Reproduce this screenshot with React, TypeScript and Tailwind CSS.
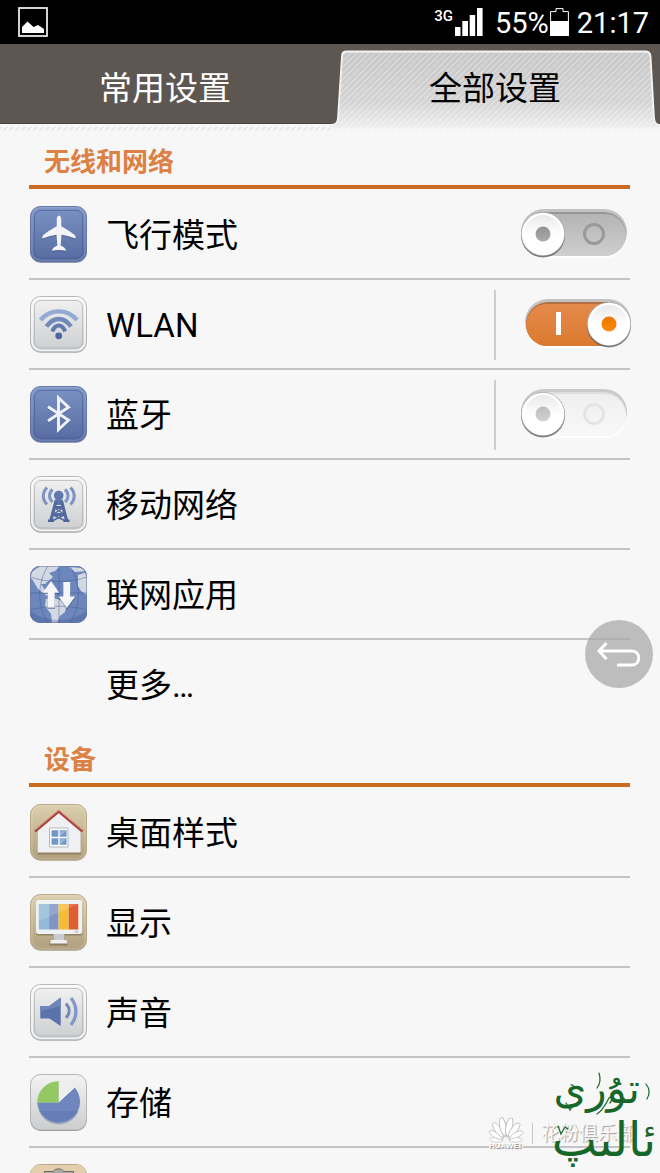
import { useId, useState, type ReactNode } from "react";

function Tile({ tone, children }: { tone: "blue" | "light" | "tan"; children: ReactNode }) {
  const id = useId();
  const colors = {
    blue: ["#7b93c4", "#566aa0", "#6579a8"],
    light: ["#f3f3f3", "#cbcdcf", "#b4b6b8"],
    tan: ["#dccfae", "#b09f7d", "#b9aa8a"],
  }[tone];
  return (
    <svg viewBox="0 0 57 58" className="h-[58px] w-[57px] shrink-0" aria-hidden="true">
      <defs>
        <linearGradient id={id} x1="0" y1="0" x2="0" y2="1">
          <stop offset="0" stopColor={colors[0]} />
          <stop offset="1" stopColor={colors[1]} />
        </linearGradient>
      </defs>
      <rect x="0.5" y="1" width="56" height="56" rx="10" fill="#000" opacity="0.22" />
      <rect x="0.5" y="0.5" width="56" height="55.5" rx="10" fill={`url(#${id})`} stroke={colors[2]} />
      <rect x="2" y="1.8" width="53" height="52.6" rx="9" fill="none" stroke="#fff" strokeOpacity={tone === "light" ? 0.85 : 0.15} strokeWidth="1.4" />
      {tone !== "tan" && (
        <rect x="4.5" y="4.5" width="48" height="47.5" rx="6.5" fill="none" stroke={tone === "blue" ? "#465c94" : "#a5a7aa"} strokeOpacity="0.6" />
      )}
      {children}
    </svg>
  );
}

const PLANE =
  "M29 9.500c1.600 0 2.300 2.400 2.300 5v5.800c5 2.800 10.500 6 13.300 8.800 1 1 1.200 2.200 1.200 3.400-4.500-1.600-9.500-3.100-14.300-3.800l-.8 10.800c2.600 1.300 4.900 2.600 5.400 5.200-2.500-.4-5-.8-7.100-.8s-4.600.4-7.100.8c.5-2.600 2.800-3.900 5.400-5.200l-.8-10.800c-4.800.7-9.800 2.200-14.300 3.800 0-1.200.2-2.400 1.200-3.400 2.800-2.800 8.300-6 13.300-8.800v-5.800c0-2.600.7-5 2.300-5z";

function PlaneIcon() {
  return (
    <Tile tone="blue">
      <path d={PLANE} fill="#2e4276" opacity=".4" transform="translate(0 1)" />
      <path d={PLANE} fill="#f2f4f9" />
    </Tile>
  );
}

function WifiIcon() {
  return (
    <Tile tone="light">
      <g fill="none" strokeWidth="4.400">
        <path d="M10.500 24C20.500 12.500 37 12.500 47 24" stroke="#94a9d3" />
        <path d="M16.500 30.500C23.500 20.500 34 20.500 41 30.500" stroke="#7289bb" />
        <path d="M22.300 35.500C25.500 27.500 32 27.500 35.200 35.500" stroke="#6179ae" strokeWidth="4" />
      </g>
      <circle cx="28.700" cy="39.800" r="3.400" fill="#4f659f" />
    </Tile>
  );
}

function BluetoothIcon() {
  return (
    <Tile tone="blue">
      <path d="M18 20.800L38.500 34.300 28.500 43.500V12L38.500 21.300 18 35" fill="none" stroke="#2e4276" strokeOpacity=".4" strokeWidth="3" transform="translate(0 1)" />
      <path d="M18 20.800L38.500 34.300 28.500 43.500V12L38.500 21.300 18 35" fill="none" stroke="#eef1f8" strokeWidth="3" />
    </Tile>
  );
}

function TowerIcon() {
  return (
    <Tile tone="light">
      <g fill="none" stroke="#7f94c2" strokeWidth="3">
        <path d="M22.500 13.500c-4 3.500-4 9 0 12.500M35 13.500c4 3.500 4 9 0 12.500" />
        <path d="M17 11.500c-5 5-5 12 0 17M40.500 11.500c5 5 5 12 0 17" />
      </g>
      <circle cx="28.700" cy="19.500" r="4.800" fill="#6078ad" />
      <path d="M24.800 23.500h7.900v5.500h-7.900z" fill="#5f76aa" />
      <g fill="none" stroke="#536a9f" strokeWidth="3.200">
        <path d="M26 25L20.800 45M31.500 25l5.200 20M24 31.500h9.500M22.500 38.500h12.500" />
        <path d="M24 31.500l10.500 7M33.500 31.500L23 38.500M22.500 38.500L35.500 45M35 38.500L22 45" strokeWidth="1.400" />
      </g>
      <path d="M18 43.500h6v2.500H18zM33.500 43.500h6v2.500h-6z" fill="#4d6399" />
    </Tile>
  );
}

function GlobeIcon() {
  const clip = useId();
  return (
    <Tile tone="blue">
      <clipPath id={clip}><rect width="57" height="57" rx="10" /></clipPath>
      <g clipPath={`url(#${clip})`}>
        <path d="M0 0h57v57H0z" fill="#6d87bd" />
        <path d="M0 7L10 0H30L25 5 19 7 23 11 15 18 11 18 15 24 19 28 17 30 8 23 2 13 0 12zM48 9L57 6V29L51 25 48 20zM16 33C23 30 30 34 37 37L35 46 30 50 27 57H22L21 48 15 40zM39 1L51 2 57 5 45 6z" fill="#d3d9e2" />
        <g fill="none" stroke="#405b94" strokeWidth=".8" opacity=".6">
          <path d="M29 0v57M18 0C7 17 7 40 18 57M40 0C51 17 51 40 40 57M5 0C-7 20-7 40 5 57M52 0C64 20 64 40 52 57M0 11C18 17 40 17 57 11M0 27H57M0 44C18 39 40 39 57 44" />
        </g>
        <path d="M0 45C18 57 40 57 57 45V57H0z" fill="#314b86" opacity=".28" />
      </g>
      <path d="M21 16.500L29.500 28H25v15h-7.500V28H12.500zM33.300 17.500H40.800V31.500H45.500L37 43.500 28.500 31.500H33.300z" fill="#263960" opacity=".45" />
      <path d="M21 15L29.200 26.800H24.700v14.700h-7V26.800H12.700zM33.300 16H40.300V30.500H45.200L36.900 42 28.500 30.500H33.300z" fill="#f5f6f8" />
      <rect x=".5" y=".5" width="56" height="56" rx="10" fill="none" stroke="#6577a0" opacity=".55" />
    </Tile>
  );
}

function HouseIcon() {
  return (
    <Tile tone="tan">
      <path d="M7.700 26L28.700 8.500 51 26V49.500H7.700z" fill="#6c5b3d" opacity=".5" transform="translate(0 1)" />
      <path d="M7.700 26L28.700 8.500 50.700 26V48.500H7.700z" fill="#eff0f1" />
      <path d="M5 27.500L28.700 7.500 52.500 27.500" fill="none" stroke="#a9403b" strokeWidth="2.400" />
      <path d="M5.500 26L28.700 6.500 52 26" fill="none" stroke="#d98177" strokeWidth=".8" />
      <path d="M19.500 24h18.500v19H19.500z" fill="#fff" stroke="#b4b7bb" />
      <path d="M21.500 26.200h6.800v6.500h-6.800zM29.800 26.200h6.800v6.500h-6.800zM21.500 34.200h6.800v6.500h-6.800zM29.800 34.200h6.800v6.500h-6.800z" fill="#7298c7" />
      <path d="M29.800 26.200h6.800L29.800 32.700zM29.800 34.200h6.800l-6.800 6.500z" fill="#94b3da" />
    </Tile>
  );
}

function MonitorIcon() {
  return (
    <Tile tone="tan">
      <path d="M23 39h12v7l2.500 2v3.500H19.500V48l3.500-2z" fill="#665838" opacity=".5" />
      <rect x="6" y="7.500" width="46.500" height="34" rx="2.500" fill="#665838" opacity=".5" />
      <path d="M23.500 39h11v7H23.500z" fill="#c9cbcf" />
      <path d="M21 46h15.500l1 3.500H20z" fill="#eff0f2" />
      <rect x="6" y="6" width="46.300" height="34" rx="2.500" fill="#f0f1f3" />
      <path d="M8.800 10h10.300v25.500H8.800z" fill="#93bad8" />
      <path d="M19.100 10h9.500v25.500h-9.500z" fill="#8194c5" />
      <path d="M28.600 10h10.100v25.500H28.600z" fill="#f3bd38" />
      <path d="M38.700 10h9.600v25.500h-9.600z" fill="#e05e34" />
      <path d="M8.800 10H48.300L8.800 27z" fill="#fff" opacity=".16" />
      <circle cx="46.500" cy="37.800" r="1.200" fill="none" stroke="#a8aaad" strokeWidth=".7" />
    </Tile>
  );
}

function SpeakerIcon() {
  return (
    <Tile tone="light">
      <path d="M10.300 22H19.300L30.700 13.500V42L19.300 34.500H10.300z" fill="#5b73ab" />
      <path d="M10.300 22H19.300L30.700 13.500V22L10.300 27z" fill="#6f86bb" />
      <path d="M36 19.500c4.200 4.700 4.200 10 0 14.200" fill="none" stroke="#7188b9" strokeWidth="3" />
      <path d="M41 14c6.500 8 6.500 19 0 27" fill="none" stroke="#8298c8" strokeWidth="3.400" />
    </Tile>
  );
}

function PieIcon() {
  const id = useId();
  return (
    <svg viewBox="0 0 57 58" className="h-[58px] w-[57px] shrink-0" aria-hidden="true">
      <defs>
        <linearGradient id={id} x1="0" y1="0" x2="0" y2="1">
          <stop offset="0" stopColor="#f3f3f3" />
          <stop offset="1" stopColor="#cbcdcf" />
        </linearGradient>
      </defs>
      <rect x=".5" y="1" width="56" height="56" rx="10" fill="#8c8e90" />
      <rect x=".5" y=".5" width="56" height="55.500" rx="10" fill={`url(#${id})`} stroke="#b3b5b8" />
      <circle cx="28.700" cy="29" r="21.500" fill="#8f99ab" opacity=".35" />
      <path d="M7.300 28.500A21.400 21.400 0 0 0 50 28.500C50 22 48 17 44.700 13.500L28.500 28.500z" fill="#6f87be" />
      <path d="M9 37A21.400 21.400 0 0 0 48.500 37z" fill="#566da8" opacity=".35" />
      <path d="M28.500 28.500V7.200A21.300 21.300 0 0 0 7.300 28.500z" fill="#93c862" />
      <path d="M29 27.500V7.200C35 7.200 40.500 9.500 44.700 13z" fill="#edeeee" />
      <path d="M29 27.500L44.700 13" stroke="#fff" />
    </svg>
  );
}

function ClipboardIcon() {
  return (
    <Tile tone="tan">
      <path d="M1 10C1 4 5 1 11 1h35c6 0 10 3 10 9v45H1z" fill="#e3cfac" />
      <rect x="10" y="9" width="37" height="42" rx="2" fill="#f4f4f2" />
      <path d="M14.500 7.500h9c1-3.500 9-3.500 10 0h10v5h-29z" fill="#a9a9a6" stroke="#6f6c65" />
    </Tile>
  );
}

function Toggle({ label, initial = false, faint = false }: { label: string; initial?: boolean; faint?: boolean }) {
  const [on, setOn] = useState(initial);
  const id = useId();
  const x = on ? 5 : 1;
  const knob = on ? 89 : 23;
  const top = on ? "#e58a4c" : faint ? "#efefef" : "#b4b4b4";
  const bottom = on ? "#db7a2e" : faint ? "#f8f8f8" : "#cfcfcf";
  return (
    <label className="-mr-0.5 block cursor-pointer">
      <input type="checkbox" role="switch" aria-label={label} className="sr-only" checked={on} onChange={(e) => setOn(e.target.checked)} />
      <svg viewBox="0 0 112 56" className="h-14 w-28" aria-hidden="true">
        <defs>
          <linearGradient id={`${id}t`} x1="0" y1="0" x2="0" y2="1">
            <stop offset="0" stopColor={top} />
            <stop offset="1" stopColor={bottom} />
          </linearGradient>
          <linearGradient id={`${id}k`} x1="0" y1="0" x2="0" y2="1">
            <stop offset="0" stopColor="#e9e9e9" />
            <stop offset=".55" stopColor="#fff" />
          </linearGradient>
          <linearGradient id={`${id}d`} x1="0" y1="0" x2="0" y2="1">
            <stop offset="0" stopColor={on ? "#ea7500" : faint ? "#bdbdbd" : "#929292"} />
            <stop offset="1" stopColor={on ? "#ff8d0a" : faint ? "#d2d2d2" : "#aaa"} />
          </linearGradient>
        </defs>
        <rect x={x} y="5" width="106" height="46" rx="23" fill="#fff" />
        <rect x={x} y="2" width="106" height="46" rx="23" fill={faint ? "#cacaca" : "#c2c2c2"} />
        <rect x={x + 1} y="5" width="104" height="44" rx="22" fill={on ? "#b0703f" : faint ? "#dedede" : "#979797"} />
        <rect x={x + 1} y="7" width="104" height="42" rx="21" fill={`url(#${id}t)`} />
        {on ? (
          <rect x="36" y="15" width="5" height="23" fill="#fff" />
        ) : (
          <circle cx="74" cy="27" r="9.500" fill="none" stroke={faint ? "#e4e4e4" : "#999"} strokeWidth="3" />
        )}
        <circle cx={knob} cy="28.500" r="22" fill="#5e5e5e" opacity=".8" />
        <circle cx={knob} cy="27" r="22" fill="#aaa" />
        <circle cx={knob} cy="27" r="21.300" fill="#fff" />
        <circle cx={knob} cy="26" r="18" fill={`url(#${id}k)`} />
        <circle cx={knob} cy="27" r="7.500" fill={`url(#${id}d)`} />
      </svg>
    </label>
  );
}

function Row({ icon, label, divider, last, children }: { icon?: ReactNode; label?: string; divider?: boolean; last?: boolean; children?: ReactNode }) {
  return (
    <li className={`flex h-[90px] items-center border-b-2 pt-0.5 ${last ? "border-transparent" : "border-[#c4c4c4]"}`}>
      <div className="flex w-[77px] shrink-0 pl-px">{icon}</div>
      <span className="flex-1 pt-0.5 text-[33px] leading-10">{label}</span>
      {divider && <span className="mr-6 h-[70px] w-0.5 bg-[#cdcdcd]" />}
      {children}
    </li>
  );
}

function Section({ title, children }: { title: string; children: ReactNode }) {
  return (
    <section className="pl-[29px] pr-[30px]">
      <div className="h-[58px] pb-px">
        <h2 className="h-full border-b-4 border-[#cb6b22] pl-[15px] pt-3 text-[26px] font-bold leading-9 text-[#dc8044]">{title}</h2>
      </div>
      <ul>{children}</ul>
    </section>
  );
}

function StatusBar() {
  return (
    <header className="flex h-11 shrink-0 items-center justify-between bg-black pl-[18px] pr-[11px] text-white">
      <svg viewBox="0 0 30 30" className="size-[30px]" aria-hidden="true">
        <rect x="1" y="1" width="28" height="28" fill="none" stroke="#e9e9e9" strokeWidth="1.800" />
        <path d="M4 26V20L9.500 14.500 15.500 20 20 18 26 22V26z" fill="#fff" />
      </svg>
      <div className="flex items-center">
        <span className="mb-3 mr-0.5 text-[15px] font-medium leading-4">3G</span>
        <svg viewBox="0 0 28 28" className="mr-3 size-7" aria-hidden="true">
          <path d="M0 19h5.500v9H0zM7.300 13h5.700v15H7.300zM14.700 7h5.500v21h-5.500zM22 0h5.600v28H22z" fill="#fff" />
        </svg>
        <span className="pt-0.5 text-[29px] leading-9">55%</span>
        <svg viewBox="0 0 19 28" className="ml-px mr-2 h-7 w-[19px]" aria-hidden="true">
          <path d="M.6 3.600H6V.6h7v3H18.400V27.400H.6z" fill="none" stroke="#fff" />
          <path d="M0 13h19v15H0z" fill="#fff" />
        </svg>
        <span className="pt-0.5 text-[29px] leading-9">21:17</span>
      </div>
    </header>
  );
}

function Tabs() {
  const outline =
    "M330 81C336 81 337.500 79 338 74L342 12Q342 7.500 347 7.500H645Q650 7.500 650.500 12L654 74C654.500 79 656 81 660 81";
  return (
    <nav className="relative grid h-[88px] shrink-0 grid-cols-2 bg-[#f7f7f7] text-[33px] leading-10">
      <svg viewBox="0 0 660 88" preserveAspectRatio="none" className="absolute inset-0 h-full w-full" aria-hidden="true">
        <defs>
          <linearGradient id="tabFace" x1="0" y1="0" x2="0" y2="1">
            <stop offset="0" stopColor="#c6c6c6" />
            <stop offset=".65" stopColor="#d3d3d3" />
            <stop offset=".95" stopColor="#ececec" />
            <stop offset="1" stopColor="#f7f7f7" />
          </linearGradient>
          <pattern id="hatch" width="6" height="6" patternUnits="userSpaceOnUse">
            <path d="M-1 1L1-1M-1 7L7-1M5 7L7 5" stroke="#fff" strokeWidth="1.400" strokeOpacity=".32" />
          </pattern>
          <pattern id="rib" width="6" height="6" patternUnits="userSpaceOnUse">
            <path d="M-1 1L1-1M-1 7L7-1M5 7L7 5" stroke="#dedede" strokeWidth="1.400" />
          </pattern>
        </defs>
        <path d="M0 0h660v80H0z" fill="#5e5650" />
        <path d="M0 79.500h660" stroke="#49433e" />
        <path d="M0 82.500h660v4H0z" fill="url(#rib)" opacity=".8" />
        <path d={`${outline}V86H330z`} fill="url(#tabFace)" />
        <path d="M338 74L342 12Q342 7 347 7H645Q650 7 650.500 12L654 74V86H338z" fill="url(#hatch)" />
        <path d={outline} fill="none" stroke="#f4f4f4" strokeWidth="1.800" />
      </svg>
      <button type="button" className="relative pt-0.5 text-white">常用设置</button>
      <button type="button" className="relative pt-0.5 text-black">全部设置</button>
    </nav>
  );
}

const PETALS = [
  { angle: -84, size: 0.72 },
  { angle: -60, size: 0.85 },
  { angle: -36, size: 0.98 },
  { angle: -12, size: 1.05 },
  { angle: 12, size: 1.05 },
  { angle: 36, size: 0.98 },
  { angle: 60, size: 0.85 },
  { angle: 84, size: 0.72 },
];

function Watermark() {
  const petal = "M0-4C-3.600-9-4-16-1.500-21.500 0-23 1.500-23 2-21.500 4-15 3.400-9 0-4z";
  return (
    <div className="pointer-events-none absolute bottom-0 right-0 h-[113px] w-[190px]" aria-hidden="true">
      <svg viewBox="0 0 190 113" className="absolute inset-0 h-full w-full">
        <path d="M19 81h34v10H19z" fill="#f7f7f7" />
        {PETALS.map(({ angle, size }) => (
          <path key={angle} d={petal} transform={`translate(36 81) rotate(${angle}) scale(${size})`} fill="#fff" stroke="#bdbdbd" strokeWidth=".9" />
        ))}
        <path d="M62.500 63v21" stroke="#c5c5c5" />
      </svg>
      <span className="absolute left-[19px] top-[80px] font-['Liberation_Sans'] text-[8px] font-bold leading-3 text-white [text-shadow:1px_1px_1px_#777]">HUAWEI</span>
      <span className="absolute left-[71px] top-[60px] text-[19px] leading-7 text-[#fafafa] [text-shadow:1px_1px_1px_#999]">花粉俱乐部</span>
      <svg viewBox="0 0 190 113" className="absolute inset-0 h-full w-full" fill="#17662a">
        <g fontFamily="'DejaVu Sans'" direction="rtl" textAnchor="start">
          <text x="170" y="43" fontSize="42">تۇرى</text>
          <text x="186" y="96" fontSize="48">ئالىپ</text>
        </g>
        <g fill="none" stroke="#17662a" strokeWidth="1.200" strokeLinecap="round">
          <path d="M129 13C131 19 130 24 127 28M96 43l4 7 4-6 3 2M176 24c4 5 4 10 1 15M88 66l3 8 4-7 3 2M101 25c4-1 3 5 0 4M152 38c4-1 3 5 0 4M127 54c5-3 8-8 12-16 3-3 4 2 1 5" />
        </g>
      </svg>
    </div>
  );
}

export default function App() {
  return (
    <div className="relative flex h-screen flex-col overflow-hidden bg-[#f7f7f7] font-[Roboto,'Noto_Sans_CJK_SC',sans-serif] text-black">
      <StatusBar />
      <Tabs />
      <main className="min-h-0 flex-1 overflow-y-auto [scrollbar-width:none]">
        <Section title="无线和网络">
          <Row icon={<PlaneIcon />} label="飞行模式"><Toggle label="飞行模式" /></Row>
          <Row icon={<WifiIcon />} label="WLAN" divider><Toggle label="WLAN" initial /></Row>
          <Row icon={<BluetoothIcon />} label="蓝牙" divider><Toggle label="蓝牙" faint /></Row>
          <Row icon={<TowerIcon />} label="移动网络" />
          <Row icon={<GlobeIcon />} label="联网应用" />
          <Row label="更多…" last />
        </Section>
        <Section title="设备">
          <Row icon={<HouseIcon />} label="桌面样式" />
          <Row icon={<MonitorIcon />} label="显示" />
          <Row icon={<SpeakerIcon />} label="声音" />
          <Row icon={<PieIcon />} label="存储" />
          <Row icon={<ClipboardIcon />} />
        </Section>
      </main>
      <button type="button" aria-label="返回" className="absolute right-[7px] top-[620px] flex size-[68px] items-center justify-center rounded-full bg-[#a9a9a9]/75">
        <svg viewBox="0 0 44 28" className="h-7 w-11" fill="none" stroke="#fff" strokeWidth="3" aria-hidden="true">
          <path d="M9.500 3L2 11l7.500 8M2.500 11H35C44 11 44 25 35 25H20" />
        </svg>
      </button>
      <Watermark />
    </div>
  );
}
